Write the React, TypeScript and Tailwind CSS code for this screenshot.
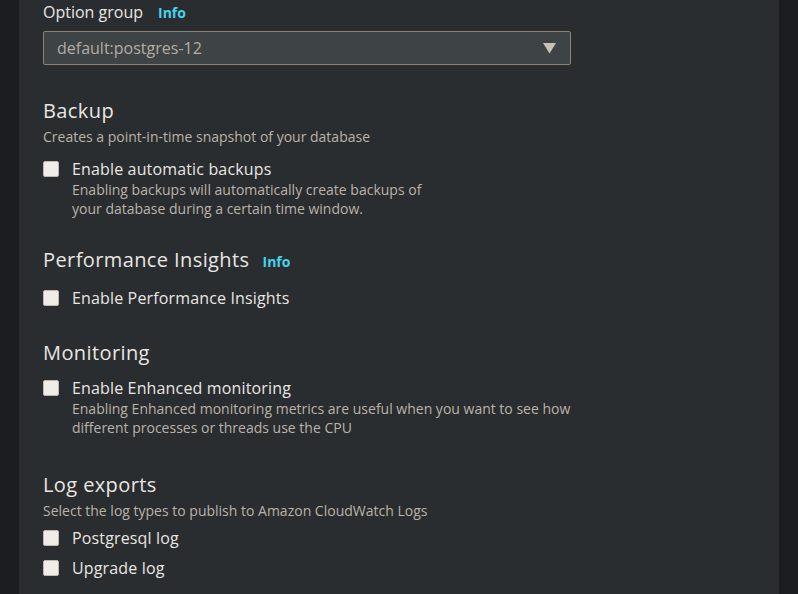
import React from 'react';

const font = { fontFamily: '"Open Sans", "Noto Sans", sans-serif' };

function Info({ className = 'ml-[13px]' }: { className?: string }) {
  return <span className={`${className} text-sm font-bold tracking-normal text-[#45d3ee]`}>Info</span>;
}

function Checkbox({ label, desc, className = '' }: { label: string; desc?: React.ReactNode; className?: string }) {
  return (
    <label className={`flex items-start gap-[13px] ${className}`}>
      <span className="mt-1 h-4 w-4 shrink-0 rounded-[2px] border border-[#bfb8ad] bg-[#f0ece7]" />
      <span className="flex flex-col">
        <span className="text-base leading-6 tracking-[0.15px] text-[#e8e6e3]">{label}</span>
        {desc && <span className="-mt-px text-sm leading-[19px] text-[#b9b3a9]">{desc}</span>}
      </span>
    </label>
  );
}

function Heading({ children, className = '' }: { children: React.ReactNode; className?: string }) {
  return (
    <h2 className={`flex items-baseline text-xl leading-7 tracking-[0.4px] text-[#e8e6e3] ${className}`}>{children}</h2>
  );
}

export default function App() {
  return (
    <div className="min-h-screen bg-[#1b1d21] px-[19px]" style={font}>
      <div className="flex min-h-[594px] flex-col bg-[#2a2d2f] px-6 pb-4">
        <div className="flex items-baseline text-base leading-6 text-[#e8e6e3]">
          Option group <Info className="ml-[15px]" />
        </div>
        <div className="mt-[7px] flex h-[34px] w-[528px] items-center justify-between rounded-[2px] border border-[#8a8372] bg-[#3e4346] pl-[13px] pr-[14px]">
          <span className="text-base text-[#b3ada2]">default:postgres-12</span>
          <svg width="13" height="11" viewBox="0 0 13 11">
            <path d="M0 0h13L6.5 10.5z" fill="#c9c1b5" />
          </svg>
        </div>

        <Heading className="mt-[32px]">Backup</Heading>
        <p className="mt-[2px] text-sm leading-5 text-[#b9b3a9]">Creates a point-in-time snapshot of your database</p>
        <Checkbox
          className="mt-[10px]"
          label="Enable automatic backups"
          desc={<>Enabling backups will automatically create backups of<br />your database during a certain time window.</>}
        />

        <Heading className="mt-[28px]">
          Performance Insights <Info />
        </Heading>
        <Checkbox className="mt-[12px]" label="Enable Performance Insights" />

        <Heading className="mt-[29px]">Monitoring</Heading>
        <Checkbox
          className="mt-[9px]"
          label="Enable Enhanced monitoring"
          desc={<>Enabling Enhanced monitoring metrics are useful when you want to see how<br />different processes or threads use the CPU</>}
        />

        <Heading className="mt-[34px]">Log exports</Heading>
        <p className="mt-[2px] text-sm leading-5 text-[#b9b3a9]">Select the log types to publish to Amazon CloudWatch Logs</p>
        <Checkbox className="mt-[5px]" label="Postgresql log" />
        <Checkbox className="mt-[6px]" label="Upgrade log" />
      </div>
    </div>
  );
}
